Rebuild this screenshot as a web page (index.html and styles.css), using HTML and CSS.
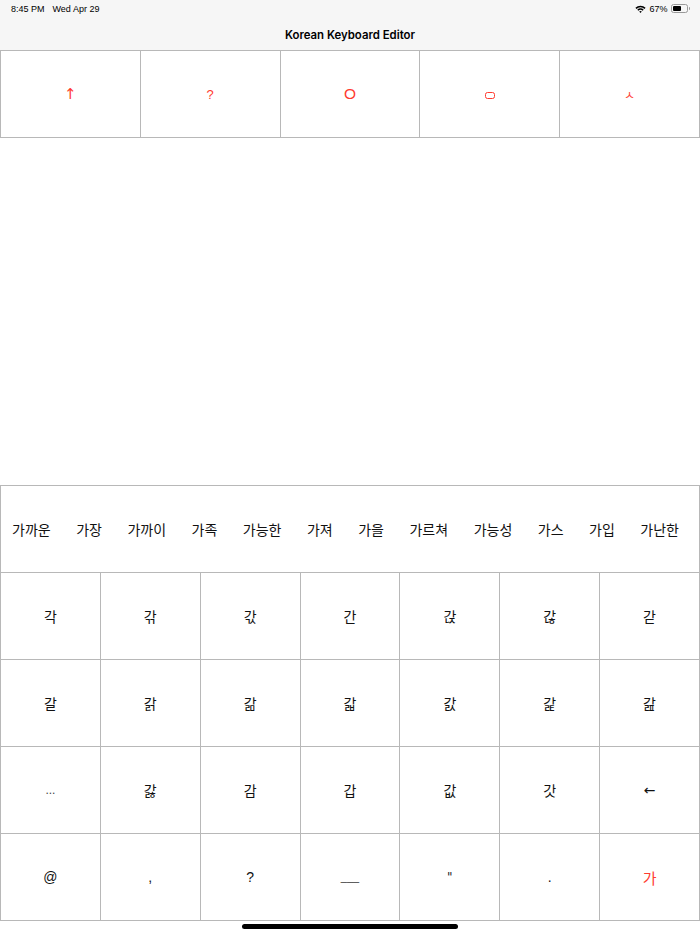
FILE: index.html
```html
<!DOCTYPE html>
<html lang="ko">
<head>
<meta charset="utf-8">
<title>Korean Keyboard Editor</title>
<link rel="stylesheet" href="styles.css">
</head>
<body>
<div class="page">
  <header class="topbar">
    <div class="status">
      <div class="status-left"><span>8:45 PM</span><span>Wed Apr 29</span></div>
      <div class="status-right">
        <svg class="wifi" width="11" height="8" viewBox="0 0 11 8">
          <path d="M0.4 2.8 A7.2 7.2 0 0 1 10.6 2.8 L9.5 3.9 A5.7 5.7 0 0 0 1.5 3.9 Z" fill="#000"/>
          <path d="M2.3 4.7 A4.5 4.5 0 0 1 8.7 4.7 L7.6 5.8 A3 3 0 0 0 3.4 5.8 Z" fill="#000"/>
          <path d="M4.2 6.6 A1.8 1.8 0 0 1 6.8 6.6 L5.5 7.9 Z" fill="#000"/>
        </svg>
        <span>67%</span>
        <span class="battery"><span class="battery-fill"></span></span><span class="battery-tip"></span>
      </div>
    </div>
    <div class="title">Korean Keyboard Editor</div>
  </header>

  <div class="jamo-row">
    <div class="jamo jamo-arrow">↑</div>
    <div class="jamo">?</div>
    <div class="jamo jamo-o">O</div>
    <div class="jamo"><span class="box-glyph" aria-label="ㅁ"></span></div>
    <div class="jamo jamo-s">ㅅ</div>
  </div>

  <div class="canvas"></div>

  <div class="suggest">
    <span>가까운</span><span>가장</span><span>가까이</span><span>가족</span><span>가능한</span><span>가져</span><span>가을</span><span>가르쳐</span><span>가능성</span><span>가스</span><span>가입</span><span>가난한</span>
  </div>

  <div class="keys">
    <div class="key">각</div><div class="key">갂</div><div class="key">갃</div><div class="key">간</div><div class="key">갅</div><div class="key">갆</div><div class="key">갇</div>
    <div class="key">갈</div><div class="key">갉</div><div class="key">갊</div><div class="key">갋</div><div class="key">갌</div><div class="key">갍</div><div class="key">갎</div>
    <div class="key key-dots">...</div><div class="key">갏</div><div class="key">감</div><div class="key">갑</div><div class="key">값</div><div class="key">갓</div><div class="key key-arrow">←</div>
    <div class="key key-sym">@</div><div class="key key-sym">,</div><div class="key key-sym">?</div><div class="key key-under">___</div><div class="key key-sym key-quote">"</div><div class="key key-sym">.</div><div class="key key-red">가</div>
  </div>

  <div class="home"><span class="home-bar"></span></div>
</div>
</body>
</html>
```

FILE: styles.css
```css
* { box-sizing: border-box; }
html, body { margin: 0; padding: 0; background: #fff; }
body {
  font-family: "Noto Sans CJK KR", "Noto Sans", sans-serif;
  color: #111;
}
.page {
  width: 700px;
  height: 934px;
  display: flex;
  flex-direction: column;
  overflow: hidden;
}
.topbar {
  height: 50px;
  background: #f6f6f6;
  flex: none;
}
.status {
  height: 17px;
  display: flex;
  justify-content: space-between;
  align-items: center;
  padding: 0 10px 0 11px;
  font-family: "Liberation Sans", Arial, sans-serif;
  font-size: 9px;
  color: #000;
}
.status-left { display: flex; gap: 8px; }
.status-right { display: flex; align-items: center; gap: 3px; }
.battery {
  width: 17px;
  height: 9px;
  border: 1px solid #999;
  border-radius: 2.5px;
  padding: 1px;
  display: inline-flex;
}
.battery-fill { width: 62%; background: #000; border-radius: 1px; }
.battery-tip {
  width: 1.5px;
  height: 3px;
  background: #999;
  margin-left: -2px;
  border-radius: 0 1px 1px 0;
}
.title {
  height: 33px;
  display: flex;
  align-items: center;
  justify-content: center;
  font-family: "Inter", "Liberation Sans", sans-serif;
  font-weight: 600;
  font-size: 11.4px;
  color: #000;
  padding-top: 3px;
}
.jamo-row {
  flex: none;
  display: grid;
  grid-template-columns: repeat(5, 1fr);
  grid-auto-rows: 86px;
  gap: 1px;
  padding: 1px;
  background: #b8b8b8;
}
.jamo {
  background: #fff;
  display: flex;
  align-items: center;
  justify-content: center;
  color: #ff3b30;
  font-family: "Liberation Sans", Arial, sans-serif;
  font-size: 13px;
}
.jamo-arrow { font-family: "DejaVu Sans", sans-serif; font-size: 15px; }
.jamo-o { font-size: 15.5px; }
.jamo-s { font-family: "Noto Sans CJK KR", sans-serif; font-size: 12px; }
.box-glyph {
  display: inline-block;
  width: 10px;
  height: 7px;
  border: 1.3px solid #ff3b30;
  border-radius: 2.5px;
  margin-top: 3px;
}
.canvas { flex: 1 1 auto; }
.suggest {
  flex: none;
  height: 87px;
  border: 1px solid #b8b8b8;
  border-bottom: none;
  display: flex;
  align-items: center;
  gap: 25.5px;
  padding: 0 0 0 11px;
  font-size: 14px;
  color: #111;
}
.keys {
  flex: none;
  display: grid;
  grid-template-columns: repeat(7, 1fr);
  grid-auto-rows: 86px;
  gap: 1px;
  padding: 1px;
  background: #b8b8b8;
}
.key {
  background: #fff;
  display: flex;
  align-items: center;
  justify-content: center;
  font-size: 14px;
  color: #111;
}
.key-sym { font-family: "Liberation Sans", Arial, sans-serif; font-size: 14px; color: #111; }
.key-quote { font-family: "DejaVu Sans", sans-serif; font-size: 12px; color: #222; }
.key-arrow { font-family: "DejaVu Sans", sans-serif; font-size: 14px; color: #111; }
.key-dots { font-family: "Liberation Sans", Arial, sans-serif; font-size: 12px; color: #444; }
.key-under { font-family: "Liberation Sans", Arial, sans-serif; font-size: 11px; color: #333; }
.key-red { color: #ff3b30; font-size: 15px; }
.home {
  flex: none;
  height: 13px;
  display: flex;
  justify-content: center;
  padding-top: 3px;
}
.home-bar {
  width: 216px;
  height: 5px;
  border-radius: 3px;
  background: #000;
}
```
